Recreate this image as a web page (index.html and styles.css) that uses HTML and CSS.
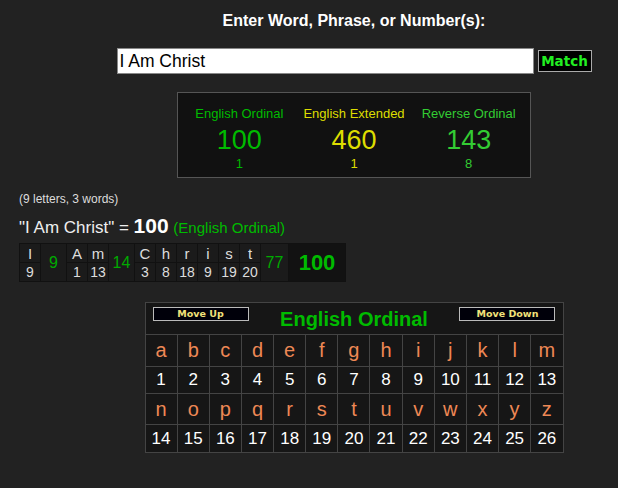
FILE: index.html
```html
<!DOCTYPE html>
<html lang="en">

<head>
    <meta charset="UTF-8">
    <meta name="viewport" content="width=device-width, initial-scale=1.0">
    <title>Gematria Calculator</title>
    <link rel="stylesheet" href="styles.css">
</head>

<body>
    <div class="col">
        <div class="entry-title">Enter Word, Phrase, or Number(s):</div>
        <div class="entry-row">
            <input type="text" class="entry-input" value="I Am Christ">
            <button class="match-button">Match</button>
        </div>
        <div class="summary-box">
            <div class="summary-item ord">
                <div class="summary-label">English Ordinal</div>
                <div class="summary-value">100</div>
                <div class="summary-small">1</div>
            </div>
            <div class="summary-item ext">
                <div class="summary-label">English Extended</div>
                <div class="summary-value">460</div>
                <div class="summary-small">1</div>
            </div>
            <div class="summary-item rev">
                <div class="summary-label">Reverse Ordinal</div>
                <div class="summary-value">143</div>
                <div class="summary-small">8</div>
            </div>
        </div>
    </div>

    <div class="breakdown">
        <div class="word-count">(9 letters, 3 words)</div>
        <div class="phrase-line">"I Am Christ" = <span class="phrase-total">100</span> <span class="phrase-cipher">(English Ordinal)</span></div>
        <table class="letter-table">
            <tr>
                <td class="lt">I</td>
                <td class="word-sum" rowspan="2">9</td>
                <td class="lt">A</td>
                <td class="lt">m</td>
                <td class="word-sum" rowspan="2">14</td>
                <td class="lt">C</td>
                <td class="lt">h</td>
                <td class="lt">r</td>
                <td class="lt">i</td>
                <td class="lt">s</td>
                <td class="lt">t</td>
                <td class="word-sum wide" rowspan="2">77</td>
                <td class="grand-total" rowspan="2">100</td>
            </tr>
            <tr>
                <td class="lv">9</td>
                <td class="lv">1</td>
                <td class="lv">13</td>
                <td class="lv">3</td>
                <td class="lv">8</td>
                <td class="lv">18</td>
                <td class="lv">9</td>
                <td class="lv">19</td>
                <td class="lv">20</td>
            </tr>
        </table>
    </div>

    <div class="col">
        <table class="cipher-table">
            <tr class="head-row">
                <th colspan="13">
                    <div class="cipher-head">
                        <button class="move-button">Move Up</button>
                        <span class="cipher-name">English Ordinal</span>
                        <button class="move-button">Move Down</button>
                    </div>
                </th>
            </tr>
            <tr class="row-a">
                <td class="ch">a</td><td class="ch">b</td><td class="ch">c</td><td class="ch">d</td><td class="ch">e</td><td class="ch">f</td><td class="ch">g</td><td class="ch">h</td><td class="ch">i</td><td class="ch">j</td><td class="ch">k</td><td class="ch">l</td><td class="ch">m</td>
            </tr>
            <tr class="row-b">
                <td class="num">1</td><td class="num">2</td><td class="num">3</td><td class="num">4</td><td class="num">5</td><td class="num">6</td><td class="num">7</td><td class="num">8</td><td class="num">9</td><td class="num">10</td><td class="num">11</td><td class="num">12</td><td class="num">13</td>
            </tr>
            <tr class="row-c">
                <td class="ch">n</td><td class="ch">o</td><td class="ch">p</td><td class="ch">q</td><td class="ch">r</td><td class="ch">s</td><td class="ch">t</td><td class="ch">u</td><td class="ch">v</td><td class="ch">w</td><td class="ch">x</td><td class="ch">y</td><td class="ch">z</td>
            </tr>
            <tr class="row-d">
                <td class="num">14</td><td class="num">15</td><td class="num">16</td><td class="num">17</td><td class="num">18</td><td class="num">19</td><td class="num">20</td><td class="num">21</td><td class="num">22</td><td class="num">23</td><td class="num">24</td><td class="num">25</td><td class="num">26</td>
            </tr>
        </table>
    </div>
</body>

</html>
```

FILE: styles.css
```css
body {
    margin: 0;
    padding: 0;
    font-family: "Liberation Sans", Arial, sans-serif;
    background-color: #222;
    color: #ddd;
}

.col {
    width: 528px;
    margin-left: 90px;
    display: flex;
    flex-direction: column;
    align-items: center;
}

.entry-title {
    margin-top: 11px;
    font-size: 16px;
    line-height: 20px;
    font-weight: bold;
    color: #fff;
}

.entry-row {
    margin-top: 17px;
    display: flex;
    align-items: center;
    gap: 4px;
}

.entry-input {
    box-sizing: border-box;
    width: 417px;
    height: 26px;
    margin: 0;
    padding: 0 3px 0 2px;
    border: 1px solid #888;
    background-color: #fff;
    color: #000;
    font-family: "Liberation Sans", Arial, sans-serif;
    font-size: 17.5px;
    outline: none;
}

.match-button {
    box-sizing: border-box;
    width: 54px;
    height: 22px;
    margin: 0;
    padding: 0;
    border: 1px solid #aaa;
    background-color: #000;
    color: #22ee22;
    font-family: "DejaVu Sans", Verdana, sans-serif;
    font-size: 13.5px;
    font-weight: bold;
}

.summary-box {
    box-sizing: border-box;
    width: 354px;
    margin-top: 18px;
    padding: 13px 4px 6px;
    display: flex;
    border: 1px solid #555;
    background-color: #111;
}

.summary-item {
    flex: 1;
    text-align: center;
}

.summary-label {
    font-size: 13px;
    line-height: 15px;
}

.summary-value {
    margin-top: 4px;
    font-size: 27px;
    line-height: 31px;
}

.summary-small {
    font-size: 13px;
    line-height: 15px;
}

.ord {
    color: #0b0;
}

.ext {
    color: #dd0;
}

.rev {
    color: #3c3;
}

.breakdown {
    padding-left: 19px;
    margin-top: 14px;
}

.word-count {
    font-size: 12px;
    line-height: 14px;
    color: #ddd;
}

.phrase-line {
    margin-top: 8px;
    font-size: 17px;
    line-height: 24px;
    color: #eee;
}

.phrase-total {
    font-size: 21px;
    font-weight: bold;
    color: #fff;
}

.phrase-cipher {
    font-size: 15px;
    color: #0b0;
}

.letter-table {
    margin-top: 3px;
    border-collapse: separate;
    border-spacing: 1px;
    background-color: #111;
}

.letter-table td {
    height: 18px;
    padding: 0;
    text-align: center;
    vertical-align: middle;
    background-color: #1b1b1b;
}

.lt {
    width: 20px;
    font-size: 15px;
    color: #ddd;
}

.lv {
    width: 20px;
    font-size: 14px;
    color: #ddd;
}

.letter-table .word-sum {
    width: 25px;
    font-size: 16px;
    color: #0a0;
}

.letter-table .word-sum.wide {
    width: 27px;
}

.letter-table .grand-total {
    width: 56px;
    font-size: 22px;
    font-weight: bold;
    color: #0b0;
    background-color: #121212;
}

.cipher-table {
    margin-top: 20px;
    width: 419px;
    table-layout: fixed;
    border-collapse: collapse;
    border: 1px solid #555;
    background-color: #161616;
}

.cipher-table td,
.cipher-table th {
    padding: 0;
    border: 1px solid #444;
    text-align: center;
    vertical-align: middle;
}

.head-row {
    height: 32px;
}

.head-row th {
    vertical-align: top;
}

.cipher-head {
    display: flex;
    justify-content: space-between;
    align-items: flex-start;
    padding: 4px 7px 0;
}

.move-button {
    box-sizing: border-box;
    width: 96px;
    height: 14px;
    margin: 0;
    padding: 0;
    border: 1px solid #bbb;
    background-color: #00000a;
    color: #f2e27a;
    font-family: "DejaVu Sans", Verdana, sans-serif;
    font-size: 9.5px;
    font-weight: bold;
    line-height: 12px;
}

.cipher-name {
    font-size: 20px;
    line-height: 24px;
    font-weight: bold;
    color: #0b0;
}

.row-a {
    height: 32px;
}

.row-b {
    height: 27px;
}

.row-c {
    height: 31px;
}

.row-d {
    height: 28px;
}

.ch {
    font-size: 20px;
    color: #ee8855;
}

.num {
    font-size: 17px;
    color: #fff;
}
```
